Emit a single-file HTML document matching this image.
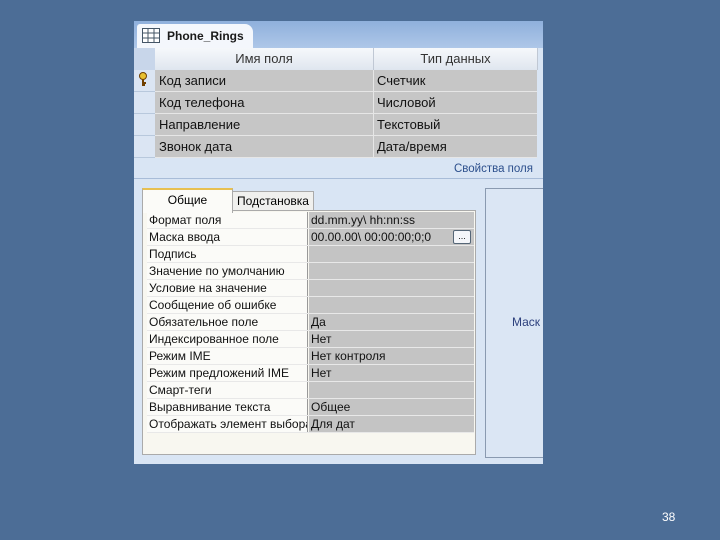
<!DOCTYPE html>
<html><head><meta charset="utf-8"><style>
body{margin:0;width:720px;height:540px;background:#4c6d96;position:relative;overflow:hidden;font-family:"Liberation Sans","DejaVu Sans",sans-serif}
.a{position:absolute}
.win{left:134px;top:21px;width:409px;height:443px;background:#d9e5f4;overflow:hidden}
.top{left:0;top:0;width:409px;height:27px;background:linear-gradient(#8fb0dc,#aec7e8)}
.tab{left:3px;top:3px;width:116px;height:24px;background:#f4f7fc;border-radius:3px 8px 0 0;font-size:12px;font-weight:bold;color:#1a1a1a}
.hdr{top:27px;height:22px;background:linear-gradient(#f6f8fb,#dfe6ef);border-right:1px solid #c0c8d4;font-size:13px;color:#333;text-align:center;line-height:22px}
.row{left:21px;width:382px;height:21px;background:#c6c6c6;border-bottom:1px solid #e6e6e6;font-size:13px;color:#111;line-height:21px}
.sel{left:0;width:21px;height:21px;background:#dbe5f3;border-bottom:1px solid #b8c8dc}
.g{left:13px;width:327px;height:16px;border-bottom:1px solid #e8e8e8;font-size:12px;line-height:16px;color:#111}
.g .l{position:absolute;left:0;width:161px;height:16px;background:#fbfbf8;padding-left:2px;box-sizing:border-box;white-space:nowrap;overflow:hidden;border-right:1px solid #999}
.g .v{position:absolute;left:162px;width:165px;height:16px;background:#c4c4c4;padding-left:2px;box-sizing:border-box;white-space:nowrap}
</style></head><body>
<div class="a win">
 <div class="a top"></div>
 <div class="a tab"><svg class="a" style="left:5px;top:4px" width="18" height="15"><rect x="0.5" y="0.5" width="17" height="14" fill="#fff" stroke="#456"/><path d="M0 5H18M0 10H18M6 0V15M12 0V15" stroke="#456"/></svg><span class="a" style="left:30px;top:5px">Phone_Rings</span></div>
 <div class="a" style="left:0;top:27px;width:21px;height:22px;background:#c8d6ea"></div>
 <div class="a hdr" style="left:21px;width:218px">Имя поля</div>
 <div class="a hdr" style="left:240px;width:163px">Тип данных</div>
 <div class="a sel" style="top:49px"><svg class="a" style="left:4px;top:2px" width="10" height="16"><circle cx="5" cy="4" r="3.5" fill="#e8c030" stroke="#704000"/><path d="M5 7V14M5 11H8M5 13H7" stroke="#704000" stroke-width="2"/></svg></div>
 <div class="a sel" style="top:71px"></div><div class="a sel" style="top:93px"></div><div class="a sel" style="top:115px"></div>
 <div class="a row" style="top:49px"><span class="a" style="left:4px">Код записи</span><span class="a" style="left:222px">Счетчик</span></div>
 <div class="a row" style="top:71px"><span class="a" style="left:4px">Код телефона</span><span class="a" style="left:222px">Числовой</span></div>
 <div class="a row" style="top:93px"><span class="a" style="left:4px">Направление</span><span class="a" style="left:222px">Текстовый</span></div>
 <div class="a row" style="top:115px"><span class="a" style="left:4px">Звонок дата</span><span class="a" style="left:222px">Дата/время</span></div>
 <div class="a" style="left:239px;top:49px;width:1px;height:88px;background:#e6e6e6"></div>
 <div class="a" style="left:0;top:157px;width:409px;height:1px;background:#a8bcd8"></div>
 <div class="a" style="right:10px;top:142px;font-size:11.5px;color:#2c4f8c">Свойства поля</div>
 <div class="a" style="left:8px;top:167px;width:89px;height:23px;background:#fbfbf8;border:1px solid #aaa;border-top:2px solid #e8c050;border-bottom:none;font-size:12px;text-align:center;line-height:20px;z-index:2">Общие</div>
 <div class="a" style="left:98px;top:170px;width:80px;height:19px;background:#f0f0ee;border:1px solid #aaa;font-size:12px;text-align:center;line-height:19px">Подстановка</div>
 <div class="a" style="left:8px;top:189px;width:332px;height:243px;background:#f8f7f0;border:1px solid #aaa"></div>
 <div class="a g" style="top:191px"><div class="l">Формат поля</div><div class="v">dd.mm.yy\ hh:nn:ss</div></div>
 <div class="a g" style="top:208px"><div class="l">Маска ввода</div><div class="v">00.00.00\ 00:00:00;0;0<span class="a" style="left:144px;top:1px;width:16px;height:12px;background:#f4f6fa;border:1px solid #567;border-radius:2px;font-size:9px;line-height:10px;text-align:center">...</span></div></div>
 <div class="a g" style="top:225px"><div class="l">Подпись</div><div class="v"></div></div>
 <div class="a g" style="top:242px"><div class="l">Значение по умолчанию</div><div class="v"></div></div>
 <div class="a g" style="top:259px"><div class="l">Условие на значение</div><div class="v"></div></div>
 <div class="a g" style="top:276px"><div class="l">Сообщение об ошибке</div><div class="v"></div></div>
 <div class="a g" style="top:293px"><div class="l">Обязательное поле</div><div class="v">Да</div></div>
 <div class="a g" style="top:310px"><div class="l">Индексированное поле</div><div class="v">Нет</div></div>
 <div class="a g" style="top:327px"><div class="l">Режим IME</div><div class="v">Нет контроля</div></div>
 <div class="a g" style="top:344px"><div class="l">Режим предложений IME</div><div class="v">Нет</div></div>
 <div class="a g" style="top:361px"><div class="l">Смарт-теги</div><div class="v"></div></div>
 <div class="a g" style="top:378px"><div class="l">Выравнивание текста</div><div class="v">Общее</div></div>
 <div class="a g" style="top:395px"><div class="l">Отображать элемент выбора</div><div class="v">Для дат</div></div>
 <div class="a" style="left:351px;top:167px;width:60px;height:268px;background:#dbe6f4;border:1px solid #8a9ab0"></div>
 <div class="a" style="left:378px;top:294px;font-size:12px;color:#2c3f7c">Маск</div>
</div>
<div class="a" style="left:662px;top:510px;font-size:12px;color:#fff">38</div>
</body></html>
